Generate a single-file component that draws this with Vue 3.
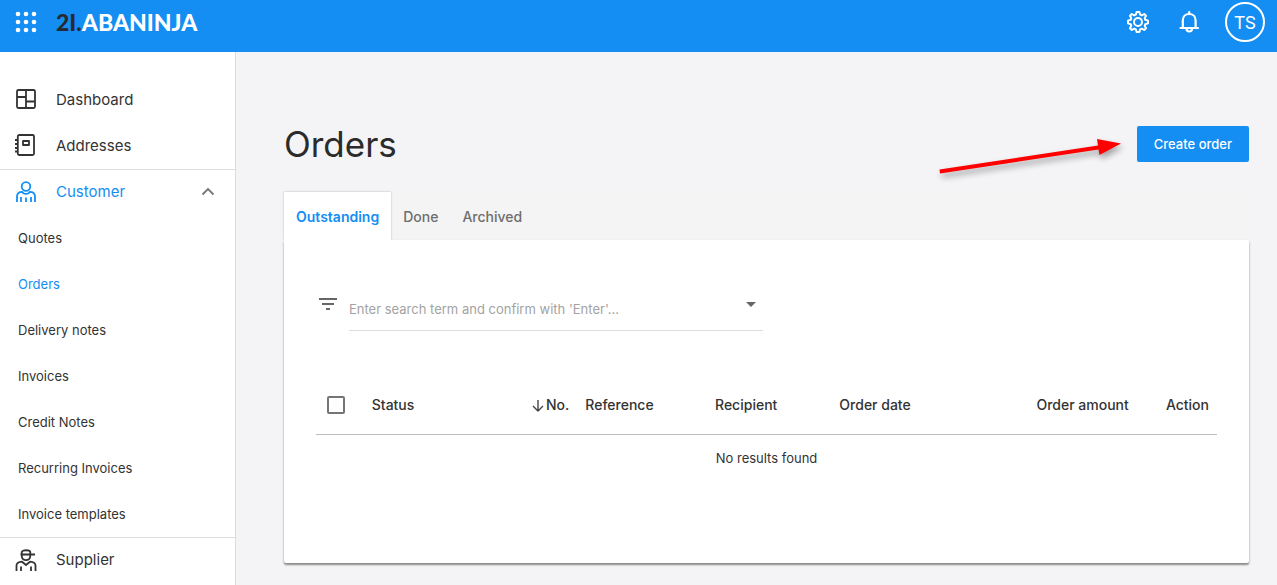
<script setup>
import { ref } from 'vue'

const customerLinks = [
  'Quotes',
  'Orders',
  'Delivery notes',
  'Invoices',
  'Credit Notes',
  'Recurring Invoices',
  'Invoice templates',
]
const tabs = ['Outstanding', 'Done', 'Archived']
const activeLink = ref('Orders')
const activeTab = ref('Outstanding')
const open = ref(true)
const term = ref('')
const dots = [3, 11, 19]
</script>

<template>
  <div class="app">
    <header class="topbar">
      <button class="icon-btn" type="button" aria-label="Apps">
        <svg width="22" height="22" viewBox="0 0 22 22" fill="#fff">
          <template v-for="y in dots" :key="y">
            <circle v-for="x in dots" :key="x" :cx="x" :cy="y" r="2.3" />
          </template>
        </svg>
      </button>
      <a class="logo" href="#"><span class="logo-dark">2I.</span>ABANINJA</a>
      <div class="top-actions">
        <button class="icon-btn" type="button" aria-label="Settings">
          <svg width="24" height="24" viewBox="0 0 24 24" fill="none" stroke="#fff" stroke-width="2" stroke-linejoin="round">
            <path d="M10.600 2H13.400L14.200 4.700L15.800 5.400L18.200 4L20 5.800L18.700 8.200L19.300 9.800L22 10.600V13.400L19.300 14.200L18.700 15.800L20 18.200L18.200 20L15.800 18.600L14.200 19.300L13.400 22H10.600L9.800 19.300L8.200 18.600L5.800 20L4 18.200L5.300 15.800L4.700 14.200L2 13.400V10.600L4.700 9.800L5.300 8.200L4 5.800L5.800 4L8.200 5.400L9.800 4.700Z" />
            <circle cx="12" cy="12" r="4" />
          </svg>
        </button>
        <button class="icon-btn" type="button" aria-label="Notifications">
          <svg width="24" height="24" viewBox="0 0 24 24" fill="none" stroke="#fff" stroke-width="2.200" stroke-linecap="round" stroke-linejoin="round">
            <path d="M3.500 18H21M5.800 17.800V10.500C5.800 6.700 8.500 4 12.200 4S18.600 6.700 18.600 10.500V17.800M12.200 3.800V2M9.500 18.500C9.500 22.500 15 22.500 15 18.500" />
          </svg>
        </button>
        <button class="avatar" type="button">TS</button>
      </div>
    </header>

    <div class="body">
      <nav class="sidebar">
        <a class="item" href="#">
          <svg class="nav-icon" viewBox="0 0 22 22">
            <rect x="2" y="2" width="18" height="18" rx="1.500" />
            <path d="M11 2V20M2 9H11M11 13.500H20" />
          </svg>
          <span>Dashboard</span>
        </a>
        <a class="item" href="#">
          <svg class="nav-icon" viewBox="0 0 22 22">
            <rect x="2.800" y="1" width="16.200" height="20" rx="1.500" />
            <path d="M8 7H14V11H8ZM0 6H3M0 10H3M0 14H3M0 17.500H3" />
          </svg>
          <span>Addresses</span>
        </a>
        <button class="item section active" type="button" :aria-expanded="open" @click="open = !open">
          <svg class="nav-icon" viewBox="0 0 22 22">
            <circle cx="11" cy="5.500" r="4.300" />
            <path d="M2 21V15.500C2 11.500 4.500 10.800 7.200 10.800C8.200 13.600 13.800 13.600 14.800 10.800C17.500 10.800 20 11.500 20 15.500V21M6 16V21M11 16.500V21M16 16V21" />
          </svg>
          <span>Customer</span>
          <svg class="chevron" viewBox="0 0 14 14"><path d="M1.500 9.500L7 4L12.500 9.500" /></svg>
        </button>
        <template v-if="open">
          <a
            v-for="link in customerLinks"
            :key="link"
            href="#"
            class="item sub"
            :class="{ active: link === activeLink }"
            @click.prevent="activeLink = link"
          >{{ link }}</a>
        </template>
        <a class="item section" href="#">
          <svg class="nav-icon" viewBox="0 0 22 22">
            <path d="M6.700 5.500V3.500C6.700 0.500 15.300 0.500 15.300 3.500V5.500M5.500 5.500H20M6.800 5.500V7.500C7.300 12.300 14.700 12.300 15.200 7.500V5.500" />
            <path d="M1.500 22V16.500C1.500 13.500 4 13 7 12.700L11 16L15 12.700C18 13 20.500 13.500 20.500 16.500V22M6 17.500V22M16 17.500V22" />
          </svg>
          <span>Supplier</span>
        </a>
      </nav>

      <main class="content">
        <div class="title-row">
          <h1>Orders</h1>
          <svg class="pointer" width="200" height="56" viewBox="0 0 200 56" aria-hidden="true">
            <path d="M8.500 43.500L167 19.500L166 13L190 17.500L168.500 29L167.500 23.500L9 47.500Z" fill="#f00" />
          </svg>
          <button class="create" type="button">Create order</button>
        </div>

        <div class="tabs" role="tablist">
          <button
            v-for="tab in tabs"
            :key="tab"
            class="tab"
            role="tab"
            type="button"
            :aria-selected="tab === activeTab"
            :class="{ selected: tab === activeTab }"
            @click="activeTab = tab"
          >{{ tab }}</button>
        </div>

        <section class="card">
          <div class="search">
            <svg class="filter" width="24" height="24" viewBox="0 0 24 24" fill="#666">
              <path d="M3 6H21V8H3ZM6 11H18V13H6ZM10 16H14V18H10Z" />
            </svg>
            <div class="field">
              <input v-model="term" type="text" aria-label="Search orders" placeholder="Enter search term and confirm with 'Enter'..." />
              <button class="icon-btn" type="button" aria-label="Show filters">
                <svg width="10" height="24" viewBox="0 0 10 24" fill="#666"><path d="M0 7H10L5 12Z" /></svg>
              </button>
            </div>
          </div>

          <table>
            <colgroup>
              <col class="c-check" />
              <col class="c-status" />
              <col class="c-no" />
              <col class="c-ref" />
              <col class="c-rec" />
              <col class="c-date" />
              <col class="c-amount" />
              <col class="c-action" />
            </colgroup>
            <thead>
              <tr>
                <th class="check"><input type="checkbox" aria-label="Select all" /></th>
                <th>Status</th>
                <th class="right">
                  <svg class="sort" width="12" height="12" viewBox="0 0 12 12"><path d="M6 0V11M1 6L6 11L11 6" /></svg>No.
                </th>
                <th>Reference</th>
                <th>Recipient</th>
                <th>Order date</th>
                <th class="right">Order amount</th>
                <th class="right">Action</th>
              </tr>
            </thead>
            <tbody>
              <tr>
                <td colspan="8">No results found</td>
              </tr>
            </tbody>
          </table>
        </section>
      </main>
    </div>
  </div>
</template>

<style>
body {
  margin: 0;
  background: #f4f4f6;
}
</style>

<style scoped>
.app {
  min-height: 100vh;
  display: flex;
  flex-direction: column;
  font-family: Inter, "Liberation Sans", sans-serif;
  font-size: 14px;
  color: #333;
}
.app *,
.app {
  box-sizing: border-box;
}
button,
input {
  font: inherit;
  color: inherit;
  background: none;
  border: 0;
  padding: 0;
  margin: 0;
}
button {
  cursor: pointer;
}
a {
  color: inherit;
  text-decoration: none;
}
svg {
  display: block;
}
.topbar {
  height: 52px;
  padding: 0 12px 8px 15px;
  display: flex;
  align-items: center;
  background: #148ef3;
  color: #fff;
}
.logo {
  margin-left: 19px;
  font-family: Lato, "Liberation Sans", sans-serif;
  font-size: 23px;
  line-height: 28px;
  font-weight: 900;
}
.logo-dark {
  color: #262b33;
}
.top-actions {
  margin-left: auto;
  display: flex;
  align-items: center;
  gap: 27px;
}
.avatar {
  width: 40px;
  height: 40px;
  margin-left: -3px;
  border: 2px solid #fff;
  border-radius: 50%;
  font-family: Roboto, "Liberation Sans", sans-serif;
  font-size: 18px;
  text-align: center;
}
.body {
  flex: 1;
  display: flex;
}
.sidebar {
  flex: 0 0 236px;
  padding-top: 25px;
  background: #fff;
  border-right: 1px solid #dcdcde;
}
.item {
  display: flex;
  align-items: center;
  width: 100%;
  height: 46px;
  padding: 0 20px 2px 15px;
  font-size: 15px;
  text-align: left;
}
.item.section {
  border-top: 1px solid #dcdcdc;
}
.item.sub {
  padding-left: 18px;
  padding-bottom: 0;
  font-size: 13px;
}
.item.active {
  color: #148ef3;
}
.nav-icon {
  width: 22px;
  height: 22px;
  margin-right: 19px;
  overflow: visible;
  fill: none;
  stroke: currentColor;
  stroke-width: 1.8;
  stroke-linejoin: round;
}
.chevron {
  width: 14px;
  height: 14px;
  margin-left: auto;
  fill: none;
  stroke: #777;
  stroke-width: 1.8;
}
.content {
  flex: 1;
  min-width: 0;
  padding: 74px 28px 22px 48px;
}
.title-row {
  position: relative;
  display: flex;
  align-items: center;
  justify-content: space-between;
  height: 36px;
}
h1 {
  margin: 0;
  font-size: 35px;
  line-height: 36px;
  font-weight: 400;
  color: #2b2b2b;
}
.pointer {
  position: absolute;
  right: 118px;
  top: 0;
  filter: drop-shadow(2px 4px 3px rgba(0, 0, 0, 0.35));
}
.create {
  height: 36px;
  padding: 0 17px;
  border-radius: 2px;
  background: #148ef3;
  color: #fff;
  font-size: 13px;
  font-weight: 500;
}
.tabs {
  display: flex;
  height: 48px;
  margin-top: 30px;
  background: #f4f4f4;
}
.tab {
  padding: 0 12px;
  font-size: 14px;
  font-weight: 500;
  color: #6e6e6e;
}
.tab.selected {
  background: #fff;
  color: #148ef3;
  font-weight: 600;
  box-shadow: 0 0 2px rgba(0, 0, 0, 0.25);
  clip-path: inset(-2px -2px 0 -2px);
}
.card {
  min-height: 323px;
  padding: 48px 32px;
  background: #fff;
  border-radius: 0 2px 2px 2px;
  box-shadow: 0 2px 2px rgba(0, 0, 0, 0.4), 0 1px 3px rgba(0, 0, 0, 0.1);
}
.search {
  display: flex;
  width: 50%;
  padding-right: 4px;
}
.filter {
  flex: none;
  margin: 4px 9px 0 0;
}
.field {
  flex: 1;
  display: flex;
  align-items: flex-start;
  height: 43px;
  padding-right: 7px;
  border-bottom: 1px solid #dedede;
}
.field .icon-btn {
  margin-top: 7px;
}
.field input {
  flex: 1;
  min-width: 0;
  height: 42px;
  font-size: 13px;
  outline: none;
}
.field input::placeholder {
  color: #a3a3a3;
  opacity: 1;
}
table {
  width: 100%;
  margin-top: 45px;
  table-layout: fixed;
  border-collapse: collapse;
}
.c-check { width: 5.3%; }
.c-status { width: 16%; }
.c-no { width: 7.7%; }
.c-ref { width: 14.4%; }
.c-rec { width: 13.8%; }
.c-date { width: 18.4%; }
.c-amount { width: 15.5%; }
.c-action { width: 8.9%; }
th,
td {
  padding: 0 8px;
}
th {
  height: 58px;
  border-bottom: 1px solid #bdbdbd;
  font-size: 14px;
  font-weight: 500;
  text-align: left;
  white-space: nowrap;
}
th.right {
  text-align: right;
}
td {
  height: 48px;
  font-size: 13px;
  text-align: center;
}
.check input {
  appearance: none;
  display: block;
  width: 18px;
  height: 18px;
  margin-left: 3px;
  border: 2px solid #757575;
  border-radius: 2px;
}
.check input:checked {
  background: #148ef3;
  border-color: #148ef3;
}
.sort {
  display: inline-block;
  margin-right: 2px;
  vertical-align: -2px;
  fill: none;
  stroke: #444;
  stroke-width: 1.4;
}
</style>
